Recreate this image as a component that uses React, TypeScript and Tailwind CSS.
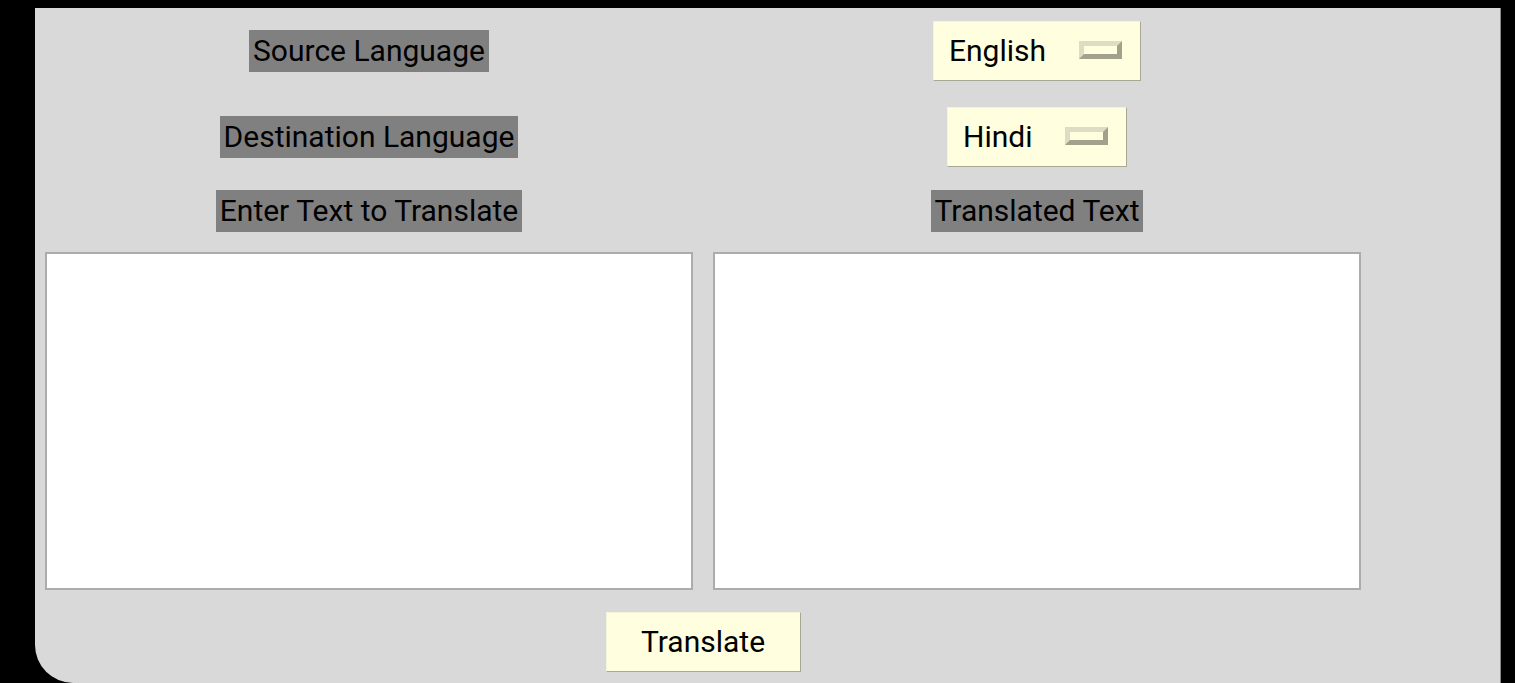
const font = { fontFamily: "Roboto, 'Noto Sans', sans-serif" };

function Label({ text }: { text: string }) {
  return (
    <div className="flex h-[42px] items-center bg-[#808080] px-[4px] text-[30px] leading-none text-black">
      {text}
    </div>
  );
}

function Indicator() {
  return (
    <div className="h-[18px] w-[43px] border-[5px] border-t-[#deddc4] border-l-[#deddc4] border-r-[#a2a18c] border-b-[#a2a18c] bg-[#ffffe0]" />
  );
}

function Dropdown({ value, width }: { value: string; width: string }) {
  return (
    <div
      className={`flex h-[60px] ${width} items-center justify-between border border-t-[#f4f4dc] border-l-[#f4f4dc] border-r-[#a9a894] border-b-[#a9a894] bg-[#ffffe0] pb-[2px] pl-[15px] pr-[18px] text-[30px] text-black`}
    >
      <span>{value}</span>
      <Indicator />
    </div>
  );
}

export default function App() {
  return (
    <div className="h-[683px] w-[1515px] overflow-hidden bg-black" style={font}>
      <div className="ml-[35px] mt-[8px] flex h-[675px] w-[1466px] flex-col rounded-bl-[38px] border-r border-r-[#8a8a8a] bg-[#d9d9d9] pl-[10px]">
        <div className="grid w-[1316px] grid-cols-[648px_648px] gap-x-[20px]">
          <div className="flex h-[86px] items-start justify-center pt-[22px]">
            <Label text="Source Language" />
          </div>
          <div className="flex h-[86px] items-start justify-center pt-[13px]">
            <Dropdown value="English" width="w-[208px]" />
          </div>
          <div className="flex h-[86px] items-start justify-center pt-[22px]">
            <Label text="Destination Language" />
          </div>
          <div className="flex h-[86px] items-start justify-center pt-[13px]">
            <Dropdown value="Hindi" width="w-[180px]" />
          </div>
          <div className="flex h-[62px] items-start justify-center pt-[10px]">
            <Label text="Enter Text to Translate" />
          </div>
          <div className="flex h-[62px] items-start justify-center pt-[10px]">
            <Label text="Translated Text" />
          </div>
          <textarea className="mt-[10px] h-[338px] resize-none border-2 border-[#acacac] bg-white outline-none" />
          <textarea className="mt-[10px] h-[338px] resize-none border-2 border-[#acacac] bg-white outline-none" />
        </div>
        <div className="flex w-[1316px] justify-center pt-[22px]">
          <button className="flex h-[60px] w-[195px] items-center justify-center border border-t-[#f4f4dc] border-l-[#f4f4dc] border-r-[#a9a894] border-b-[#a9a894] bg-[#ffffe0] pb-[2px] text-[30px] text-black">
            Translate
          </button>
        </div>
      </div>
    </div>
  );
}
